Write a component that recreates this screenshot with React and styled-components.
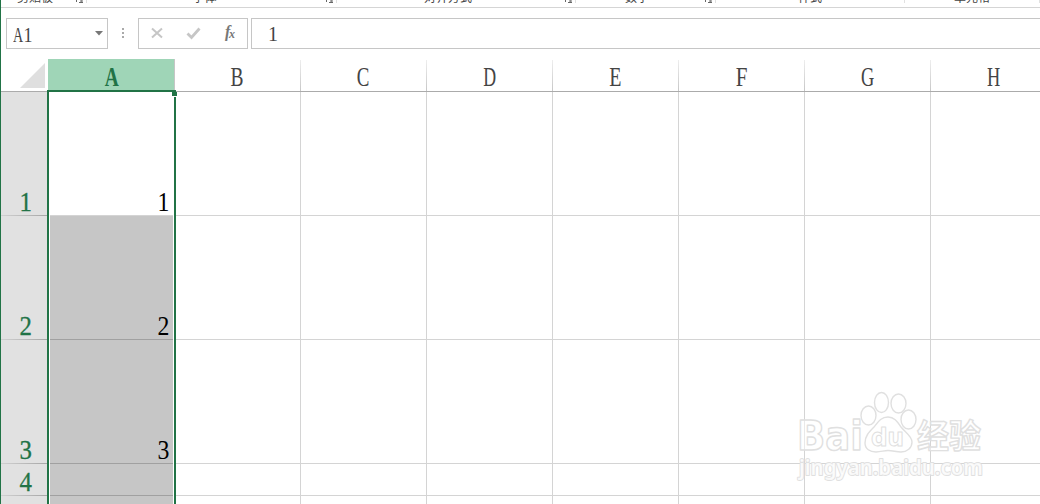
import styled, { createGlobalStyle } from 'styled-components'

const green = '#217346'
const serif = `'Liberation Serif', 'Noto Sans CJK SC', serif`

const GlobalStyle = createGlobalStyle`
    * { box-sizing: border-box; }
    body { margin: 0; overflow: hidden; background: #fff; }
`
const Window = styled.div`
    position: relative;
    display: flex;
    flex-direction: column;
    width: 1040px;
    height: 504px;
    overflow: hidden;
    border-left: 1px solid ${green};
    background: #fff;
`
const Ribbon = styled.div`
    display: flex;
    flex: none;
    height: 8px;
    overflow: hidden;
    border-bottom: 1px solid #d5d5d5;
`
const RibbonGroup = styled.div`
    position: relative;
    flex: none;
    display: flex;
    justify-content: center;
    width: ${p => p.$width}px;
    height: 3px;
    padding-right: ${p => p.$pad}px;
    border-right: 1px solid #e1e1e1;
`
const RibbonLabel = styled.span`
    height: 16px;
    margin-top: -11px;
    font: 12px/16px 'Noto Sans CJK SC', sans-serif;
    color: #444;
    white-space: nowrap;
`
const Launcher = styled.svg`
    position: absolute;
    right: 3px;
    top: 0;
    width: 8px;
    height: 3px;
`
const FormulaBar = styled.div`
    display: flex;
    flex: none;
    height: 51px;
    padding: 10px 0 0 5px;
`
const Box = styled.div`
    display: flex;
    align-items: center;
    height: 31px;
    border: 1px solid #c6c6c6;
    font: 20px/31px ${serif};
    color: #444;
`
const NameBox = styled(Box)`
    justify-content: space-between;
    width: 102px;
    padding: 0 4px 0 6px;
`
const NameText = styled.span`
    display: flex;
    gap: 0;
    padding-top: 3px;

    & > :last-child {
        margin-left: -4px;
    }
`
const Dots = styled.svg`
    width: 30px;
    height: 31px;
`
const Actions = styled(Box)`
    width: 110px;
    margin-right: 3px;
`
const FormulaInput = styled(Box)`
    flex: 1;
    padding: 2px 0 0 16px;
    border-right: 0;
`
const Narrow = styled.span`
    display: inline-block;
    transform: scaleX(${p => p.$scale});
    transform-origin: ${p => p.$origin || 'center'};
`
const Sheet = styled.div`
    display: grid;
    grid-template-columns: 47px 127px repeat(7, 126px);
    grid-template-rows: 33px 124px 124px 124px 32px 32px;
    width: 1056px;
`
const Corner = styled.div`
    display: flex;
    justify-content: flex-end;
    padding: 4px 3px 0 0;
    border-bottom: 1px solid #ababab;
`
const ColumnHeader = styled.div`
    display: flex;
    justify-content: center;
    padding: 2px ${p => p.$active ? 0 : 1}px 0 0;
    border-bottom: 1px solid #ababab;
    background: ${p => p.$active
        ? 'linear-gradient(#c6c6c6, #c6c6c6) right / 1px 100% no-repeat #9fd5b7'
        : 'linear-gradient(#eee, #c6c6c6) right 1px / 1px 100% no-repeat #fff'};
    font: ${p => p.$active ? 'bold' : 'normal'} 27px/32px ${serif};
    color: ${p => p.$active ? green : '#444'};
`
const RowHeader = styled.div`
    display: flex;
    align-items: flex-end;
    justify-content: center;
    padding: 0 0 1px 2px;
    background: linear-gradient(90deg, #d0d0d0, #a6a6a6) bottom / 100% 1px no-repeat #e1e1e1;
    font: 27px/26px ${serif};
    -webkit-text-stroke: 0.3px ${green};
    color: ${green};
`
const Cell = styled.div`
    display: flex;
    align-items: flex-end;
    justify-content: flex-end;
    padding: 0 5px 1px 0;
    border-right: 1px solid #d4d4d4;
    border-bottom: 1px solid ${p => p.$shaded ? '#a0a0a0' : '#d4d4d4'};
    background: ${p => p.$shaded ? '#c6c6c6' : '#fff'};
    font: 27px/24px ${serif};
    color: #000;
`
const Selection = styled.div`
    position: absolute;
    left: 46px;
    top: 90px;
    width: 129px;
    height: 420px;
    border: 2px solid ${green};
    box-shadow: inset 1px 0 #fff, inset -1px 0 #fff;
`
const Handle = styled.i`
    position: absolute;
    top: 0;
    right: -3px;
    width: 5px;
    height: 5px;
    border-bottom: 1px solid #fff;
    background: ${green};
`
const Watermark = styled.svg`
    position: absolute;
    left: 789px;
    top: 384px;
    width: 210px;
    height: 110px;
`

const groups = [
    { title: '剪贴板', width: 86, pad: 17, launcher: true },
    { title: '字体', width: 250, pad: 14, launcher: true },
    { title: '对齐方式', width: 239, pad: 16, launcher: true },
    { title: '数字', width: 140, pad: 17, launcher: true },
    { title: '样式', width: 189, pad: 0 },
    { title: '单元格', width: 135, pad: 0 },
]
const columns = ['A', 'B', 'C', 'D', 'E', 'F', 'G', 'H']
const rows = [1, 2, 3, 4, 5]
const letterScale = { A: 0.72, B: 0.72, C: 0.7, D: 0.66, E: 0.74, F: 0.78, G: 0.68, H: 0.68 }

const RibbonGroups = () => (
    <Ribbon>
        {groups.map(el => (
            <RibbonGroup key={el.title} $width={el.width} $pad={el.pad}>
                <RibbonLabel>{el.title}</RibbonLabel>
                {el.launcher && (
                    <Launcher viewBox="0 0 8 3">
                        <path d="M1.5 0v2M4 2.5h4M7 0v3M5 1h2" stroke="#666" fill="none" />
                    </Launcher>
                )}
            </RibbonGroup>
        ))}
    </Ribbon>
)

const Formula = () => (
    <FormulaBar>
        <NameBox>
            <NameText>
                <Narrow $scale={0.7} $origin="left">A</Narrow>
                <Narrow $scale={0.9}>1</Narrow>
            </NameText>
            <svg width="8" height="5"><path d="M0 0h8L4 4.5z" fill="#777" /></svg>
        </NameBox>
        <Dots viewBox="0 0 30 31">
            <path d="M14 10h2v2h-2zM14 14h2v2h-2zM14 18h2v2h-2z" fill="#aaa" />
        </Dots>
        <Actions>
            <svg width="108" height="29">
                <path d="M13 9.5l10 9M23 9.5l-10 9" stroke="#c6c6c6" strokeWidth="2" />
                <path d="M48.5 14.5l4 4 8-9" stroke="#c6c6c6" strokeWidth="2.8" fill="none" />
                <text x="86" y="18" fontFamily="Liberation Serif, serif" fontStyle="italic" fontWeight="bold" fontSize="16" fill="#777">f</text>
                <text x="90" y="19" fontFamily="Liberation Serif, serif" fontStyle="italic" fontWeight="bold" fontSize="12" fill="#777">x</text>
            </svg>
        </Actions>
        <FormulaInput>1</FormulaInput>
    </FormulaBar>
)

const Brand = () => (
    <Watermark viewBox="0 0 210 110" fill="#fff" fillOpacity="0.5" stroke="#e0e0e0" strokeWidth="1.4" strokeLinejoin="round">
        <g fontFamily="DejaVu Sans, sans-serif" fontWeight="bold">
            <text x="7" y="66" fontSize="40" textLength="66" lengthAdjust="spacingAndGlyphs">Bai</text>
            <ellipse cx="78.5" cy="31.5" rx="7.5" ry="9.5" />
            <ellipse cx="91.5" cy="18.5" rx="7" ry="10" />
            <ellipse cx="108.5" cy="19.5" rx="7.5" ry="9.5" />
            <ellipse cx="118.500" cy="35.500" rx="7.500" ry="9.500" />
            <path d="M98 33C91 33 88 38 84 43C79 48 75 52 75 59C75 65 80 68 86 68C91 68 94 66.5 98 66.5C103 66.5 106 68 111 68C117 68 122 64 122 58C122 52 115 48 111 43C107 37 104 33 98 33Z" />
            <text x="81" y="61.5" strokeWidth="1" fontSize="24" textLength="33" lengthAdjust="spacingAndGlyphs">du</text>
            <text x="127" y="63.5" fontFamily="Noto Sans CJK SC, sans-serif" fontSize="33" textLength="64" lengthAdjust="spacingAndGlyphs">经验</text>
        </g>
        <text x="9" y="91" fillOpacity="0.8" strokeWidth="1.8" paintOrder="stroke" fontFamily="Noto Sans, sans-serif" fontWeight="600" fontSize="21" textLength="184" lengthAdjust="spacingAndGlyphs">jingyan.baidu.com</text>
    </Watermark>
)

export default function App() {
    return (
        <>
            <GlobalStyle />
            <Window>
                <RibbonGroups />
                <Formula />
                <Sheet>
                    <Corner>
                        <svg width="25" height="25"><path d="M25 0v25H0z" fill="#dfdfdf" /></svg>
                    </Corner>
                    {columns.map(el => (
                        <ColumnHeader key={el} $active={el === 'A'}>
                            <Narrow $scale={letterScale[el]}>{el}</Narrow>
                        </ColumnHeader>
                    ))}
                    {rows.map(row => [
                        <RowHeader key={row}>
                            {row < 5 && <Narrow $scale={0.92}>{row}</Narrow>}
                        </RowHeader>,
                        ...columns.map(el => (
                            <Cell key={el + row} $shaded={el === 'A' && row > 1}>
                                {el === 'A' && row < 4 && <Narrow $scale={0.88} $origin="right">{row}</Narrow>}
                            </Cell>
                        )),
                    ])}
                </Sheet>
                <Selection><Handle /></Selection>
                <Brand />
            </Window>
        </>
    )
}
